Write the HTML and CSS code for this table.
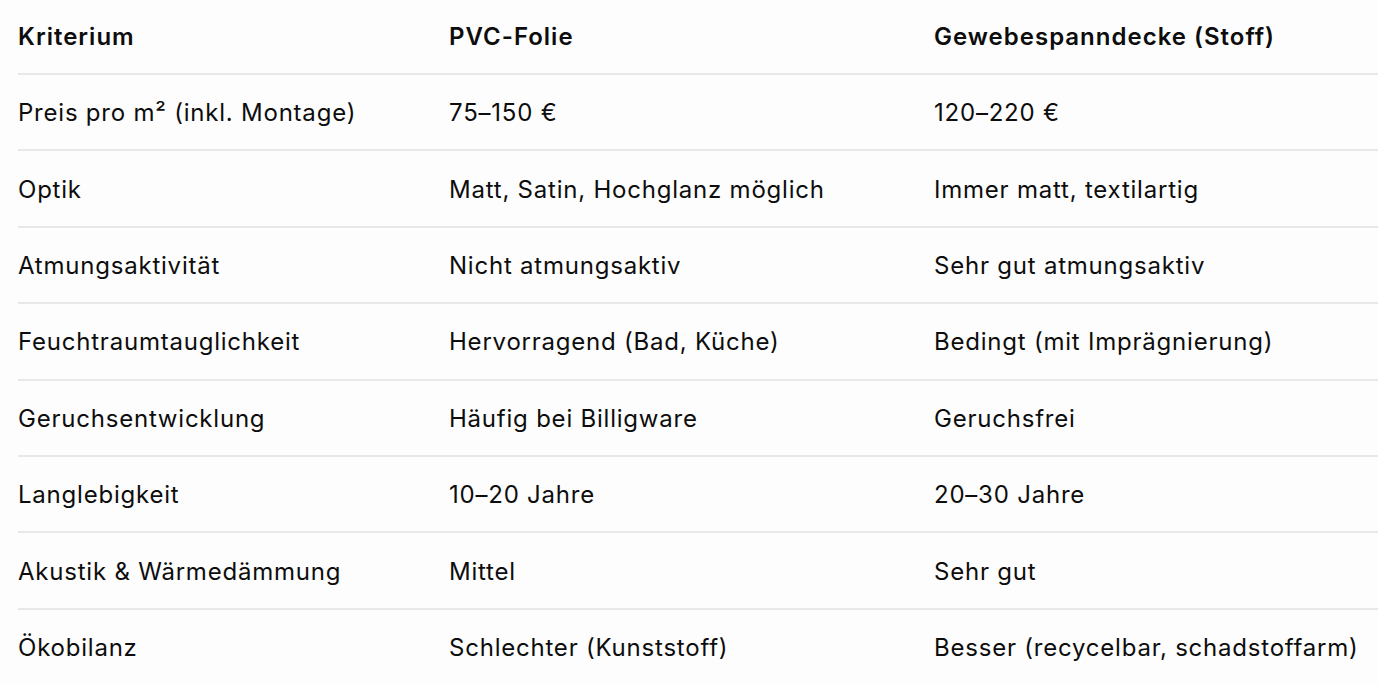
FILE: index.html
```html
<!DOCTYPE html>
<html lang="de">
<head>
<meta charset="utf-8">
<title>Vergleich Spanndecken</title>
<link rel="stylesheet" href="styles.css">
</head>
<body>
<div class="wrap">
<table class="cmp">
<thead>
<tr><th class="c1">Kriterium</th><th class="c2">PVC-Folie</th><th class="c3">Gewebespanndecke (Stoff)</th></tr>
</thead>
<tbody>
<tr><td>Preis pro m² (inkl. Montage)</td><td>75–150 €</td><td>120–220 €</td></tr>
<tr><td>Optik</td><td>Matt, Satin, Hochglanz möglich</td><td>Immer matt, textilartig</td></tr>
<tr><td>Atmungsaktivität</td><td>Nicht atmungsaktiv</td><td>Sehr gut atmungsaktiv</td></tr>
<tr><td>Feuchtraumtauglichkeit</td><td>Hervorragend (Bad, Küche)</td><td>Bedingt (mit Imprägnierung)</td></tr>
<tr><td>Geruchsentwicklung</td><td>Häufig bei Billigware</td><td>Geruchsfrei</td></tr>
<tr><td>Langlebigkeit</td><td>10–20 Jahre</td><td>20–30 Jahre</td></tr>
<tr><td>Akustik &amp; Wärmedämmung</td><td>Mittel</td><td>Sehr gut</td></tr>
<tr><td>Ökobilanz</td><td>Schlechter (Kunststoff)</td><td>Besser (recycelbar, schadstoffarm)</td></tr>
</tbody>
</table>
</div>
</body>
</html>
```
FILE: styles.css
```css
html, body {
  margin: 0;
  padding: 0;
  background: #fdfdfd;
}
body {
  font-family: Inter, "Liberation Sans", sans-serif;
  color: #0d0d0d;
  overflow: hidden;
}
.wrap {
  padding-left: 18px;
}
.cmp {
  border-collapse: collapse;
  table-layout: fixed;
  width: 1360px;
  font-size: 24px;
  letter-spacing: 0.78px;
}
.cmp th, .cmp td {
  padding: 0;
  text-align: left;
  vertical-align: middle;
  white-space: nowrap;
}
.cmp th {
  font-weight: 600;
  letter-spacing: 1px;
  height: 73px;
  border-bottom: 2px solid #e8e8e8;
}
.cmp td {
  height: 73.4px;
  padding-top: 1px;
  border-bottom: 2px solid #e8e8e8;
}
.cmp tbody tr:last-child td {
  border-bottom: none;
}
.c1 { width: 431px; }
.c2 { width: 485px; }
```
